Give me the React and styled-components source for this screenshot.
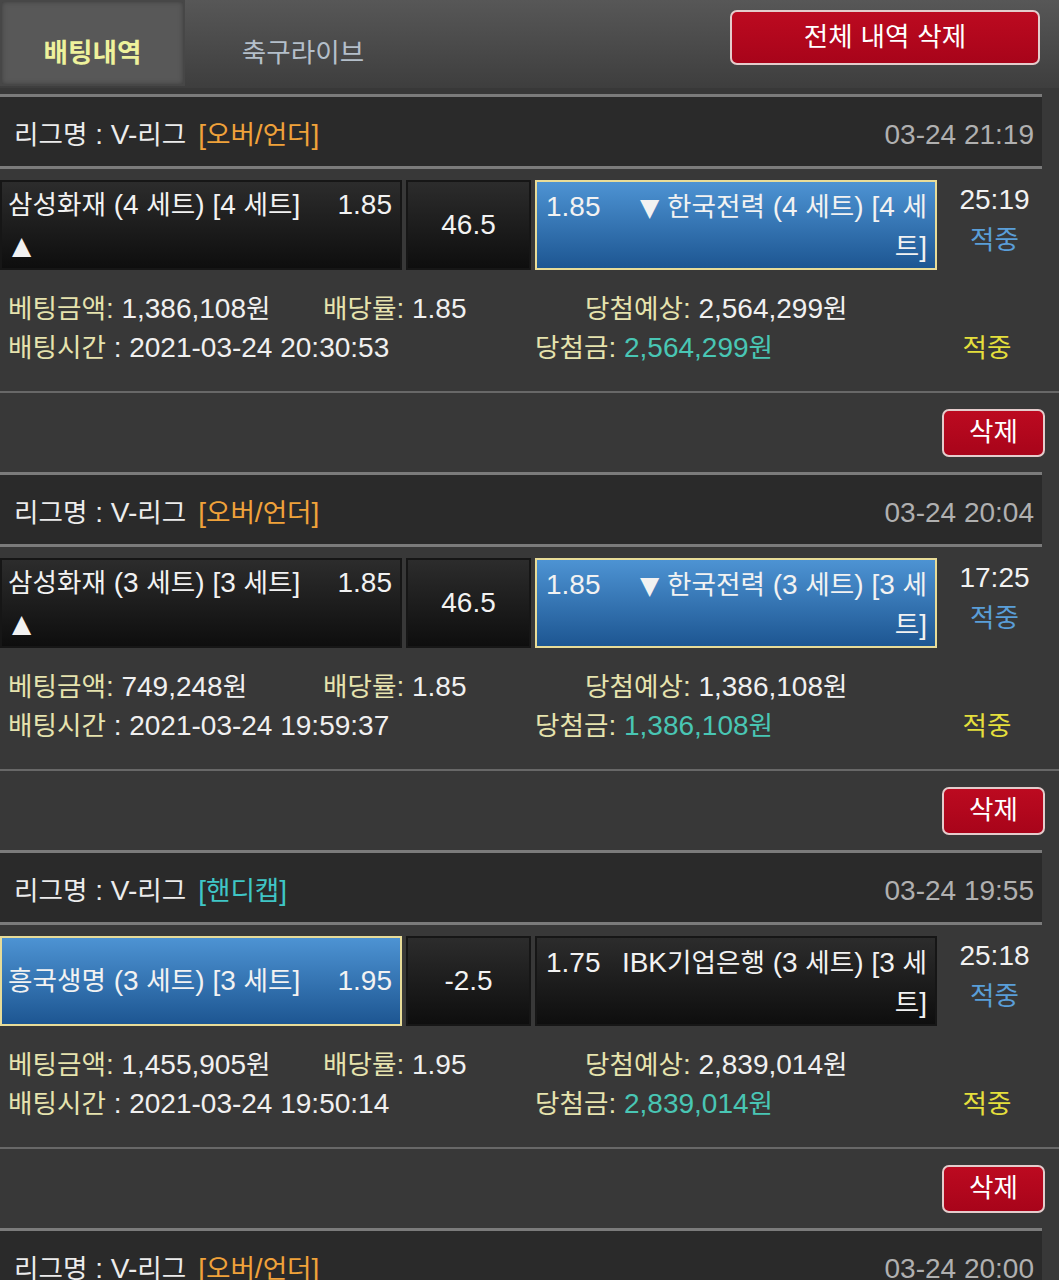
import React from "react";
import styled, { createGlobalStyle } from "styled-components";

const GlobalStyle = createGlobalStyle`
  html, body { margin: 0; padding: 0; }
  body {
    background: #383838;
    overflow: hidden;
    font-family: "Liberation Sans", "Noto Sans CJK KR", sans-serif;
    font-size: 28px;
    color: #f0f0f0;
  }
`;

const HANGUL = /([\u1100-\u11FF\u3130-\u318F\uAC00-\uD7AF]+)/;

const Ko = styled.span`
  font-family: "Noto Sans CJK KR", sans-serif;
  font-size: 0.95em;
  line-height: 1;
`;

function k(text) {
  return String(text)
    .split(HANGUL)
    .map((part, i) => (i % 2 === 1 ? <Ko key={i}>{part}</Ko> : part));
}

const Page = styled.div`
  width: 1059px;
  height: 1280px;
  overflow: hidden;
`;

const TopBar = styled.div`
  display: flex;
  align-items: flex-start;
  height: 88px;
  background: linear-gradient(#575757, #3e3e3e);
`;

const Tab = styled.div`
  width: ${(p) => p.$w}px;
  height: 86px;
  box-sizing: border-box;
  display: flex;
  align-items: center;
  justify-content: center;
  padding-top: 16px;
  font-size: 28px;
  font-weight: ${(p) => (p.$active ? 700 : 400)};
  color: ${(p) => (p.$active ? "#eef29c" : "#b4bfca")};
  background: ${(p) => (p.$active ? "#585858" : "transparent")};
  box-shadow: ${(p) =>
    p.$active ? "inset 0 0 0 2px #474747, inset 0 0 6px rgba(0,0,0,0.55)" : "none"};
`;

const Spacer = styled.div`
  flex: 1;
`;

const RedButton = styled.button`
  box-sizing: border-box;
  width: ${(p) => p.$w}px;
  height: ${(p) => p.$h}px;
  border: 2px solid #e4cccc;
  border-radius: 7px;
  background: linear-gradient(#bc0a20, #a8041a);
  color: #ffffff;
  font-family: "Liberation Sans", "Noto Sans CJK KR", sans-serif;
  font-size: 28px;
  padding: 0 0 2px;
  cursor: pointer;
`;

const TopButton = styled(RedButton)`
  margin: 10px 19px 0 0;
`;

const Block = styled.section`
  margin-top: 6px;
  & + & {
    margin-top: 0;
  }
`;

const LeagueHeader = styled.div`
  width: 1042px;
  height: 75px;
  box-sizing: border-box;
  border-top: 3px solid #7b7b7b;
  border-bottom: 3px solid #7b7b7b;
  background: #2a2a2a;
  display: flex;
  align-items: center;
  justify-content: space-between;
  padding: 6px 8px 0 14px;
`;

const LeagueName = styled.div`
  color: #ececec;
`;

const LeagueType = styled.span`
  margin-left: 12px;
  color: ${(p) => (p.$type === "handi" ? "#3fc6c6" : "#f0a23a")};
`;

const DateText = styled.div`
  color: #b0b0b0;
`;

const MatchRow = styled.div`
  margin-top: 11px;
  width: 1042px;
  height: 90px;
  display: flex;
  gap: 4px;
`;

const Box = styled.div`
  box-sizing: border-box;
  height: 90px;
  border: 2px solid ${(p) => (p.$sel ? "#e8dc98" : "#161616")};
  background: ${(p) =>
    p.$sel
      ? "linear-gradient(#4d93d3, #1d5692)"
      : "linear-gradient(#2c2c2c, #0e0e0e)"};
  color: #f2f2f2;
  line-height: 40px;
`;

const HomeBox = styled(Box)`
  width: 402px;
  padding: 0 8px 0 6px;
  display: flex;
  flex-direction: column;
  justify-content: center;
`;

const HomeLine = styled.div`
  display: flex;
  justify-content: space-between;
`;

const Arrow = styled.span`
  font-family: "DejaVu Sans", sans-serif;
  font-size: 25px;
  line-height: 1;
  margin-left: ${(p) => p.$gap || 0}px;
`;

const CenterBox = styled(Box)`
  width: 125px;
  display: flex;
  align-items: center;
  justify-content: center;
`;

const AwayBox = styled(Box)`
  width: 402px;
  padding: 3px 8px 0 9px;
  text-align: right;
  display: flex;
  flex-direction: column;
  justify-content: center;
`;

const AwayText = styled.div``;

const AwayOdds = styled.span`
  float: left;
`;

const StatusCol = styled.div`
  flex: 1;
  display: flex;
  flex-direction: column;
  align-items: center;
  line-height: 40px;
  padding-left: 6px;
`;

const Clock = styled.div`
  color: #f2f2f2;
`;

const StatusBlue = styled.div`
  color: #5a9ed8;
`;

const Info = styled.div`
  padding: 19px 22px 24px 8px;
  line-height: 39px;
  border-bottom: 2px solid #686868;
`;

const InfoRow = styled.div`
  display: grid;
  grid-template-columns: ${(p) => p.$cols};
  white-space: nowrap;
`;

const Label = styled.span`
  color: #e6e3ae;
`;

const Value = styled.span`
  color: ${(p) => (p.$win ? "#49c6b4" : "#f0f0f0")};
`;

const Result = styled.div`
  color: #e4df3c;
  text-align: center;
`;

const DeleteRow = styled.div`
  display: flex;
  justify-content: flex-end;
  padding: 16px 14px 15px 0;
`;

const bets = [
  {
    type: "ou",
    typeLabel: "[오버/언더]",
    date: "03-24 21:19",
    home: "삼성화재 (4 세트) [4 세트]",
    homeOdds: "1.85",
    arrow: true,
    center: "46.5",
    away: "▼ 한국전력 (4 세트) [4 세트]",
    awayOdds: "1.85",
    pick: "away",
    clock: "25:19",
    amount: "1,386,108원",
    rate: "1.85",
    expect: "2,564,299원",
    time: "2021-03-24 20:30:53",
    win: "2,564,299원",
  },
  {
    type: "ou",
    typeLabel: "[오버/언더]",
    date: "03-24 20:04",
    home: "삼성화재 (3 세트) [3 세트]",
    homeOdds: "1.85",
    arrow: true,
    center: "46.5",
    away: "▼ 한국전력 (3 세트) [3 세트]",
    awayOdds: "1.85",
    pick: "away",
    clock: "17:25",
    amount: "749,248원",
    rate: "1.85",
    expect: "1,386,108원",
    time: "2021-03-24 19:59:37",
    win: "1,386,108원",
  },
  {
    type: "handi",
    typeLabel: "[핸디캡]",
    date: "03-24 19:55",
    home: "흥국생명 (3 세트) [3 세트]",
    homeOdds: "1.95",
    arrow: false,
    center: "-2.5",
    away: "IBK기업은행 (3 세트) [3 세트]",
    awayOdds: "1.75",
    pick: "home",
    clock: "25:18",
    amount: "1,455,905원",
    rate: "1.95",
    expect: "2,839,014원",
    time: "2021-03-24 19:50:14",
    win: "2,839,014원",
  },
  {
    type: "ou",
    typeLabel: "[오버/언더]",
    date: "03-24 20:00",
    home: "삼성화재 (2 세트) [2 세트]",
    homeOdds: "1.85",
    arrow: true,
    center: "46.5",
    away: "▼ 한국전력 (2 세트) [2 세트]",
    awayOdds: "1.85",
    pick: "away",
    clock: "25:21",
    amount: "1,000,000원",
    rate: "1.85",
    expect: "1,850,000원",
    time: "2021-03-24 19:40:02",
    win: "1,850,000원",
  },
];

function BetBlock({ b }) {
  return (
    <Block>
      <LeagueHeader>
        <LeagueName>
          {k("리그명 : V-리그")}
          <LeagueType $type={b.type}>{k(b.typeLabel)}</LeagueType>
        </LeagueName>
        <DateText>{b.date}</DateText>
      </LeagueHeader>
      <MatchRow>
        <HomeBox $sel={b.pick === "home"}>
          <HomeLine>
            <span>{k(b.home)}</span>
            <span>{b.homeOdds}</span>
          </HomeLine>
          {b.arrow && (
            <div>
              <Arrow $gap={4}>▲</Arrow>
            </div>
          )}
        </HomeBox>
        <CenterBox>{b.center}</CenterBox>
        <AwayBox $sel={b.pick === "away"}>
          <AwayText>
            <AwayOdds>{b.awayOdds}</AwayOdds>
            {b.away.startsWith("▼") ? (
              <>
                <Arrow $gap={14}>▼</Arrow>
                {k(b.away.slice(1))}
              </>
            ) : (
              k(b.away)
            )}
          </AwayText>
        </AwayBox>
        <StatusCol>
          <Clock>{b.clock}</Clock>
          <StatusBlue>{k("적중")}</StatusBlue>
        </StatusCol>
      </MatchRow>
      <Info>
        <InfoRow $cols="315px 262px 1fr">
          <span>
            <Label>{k("베팅금액:")}</Label> <Value>{k(b.amount)}</Value>
          </span>
          <span>
            <Label>{k("배당률:")}</Label> <Value>{b.rate}</Value>
          </span>
          <span>
            <Label>{k("당첨예상:")}</Label> <Value>{k(b.expect)}</Value>
          </span>
        </InfoRow>
        <InfoRow $cols="527px 1fr 100px">
          <span>
            <Label>{k("배팅시간")}</Label> <Value>: {b.time}</Value>
          </span>
          <span>
            <Label>{k("당첨금:")}</Label> <Value $win>{k(b.win)}</Value>
          </span>
          <Result>{k("적중")}</Result>
        </InfoRow>
      </Info>
      <DeleteRow>
        <RedButton $w={103} $h={48}>
          {k("삭제")}
        </RedButton>
      </DeleteRow>
    </Block>
  );
}

export default function App() {
  return (
    <Page>
      <GlobalStyle />
      <TopBar>
        <Tab $active $w={185}>
          {k("배팅내역")}
        </Tab>
        <Tab $w={236}>{k("축구라이브")}</Tab>
        <Spacer />
        <TopButton $w={310} $h={55}>
          {k("전체 내역 삭제")}
        </TopButton>
      </TopBar>
      {bets.map((b, i) => (
        <BetBlock key={i} b={b} />
      ))}
    </Page>
  );
}
